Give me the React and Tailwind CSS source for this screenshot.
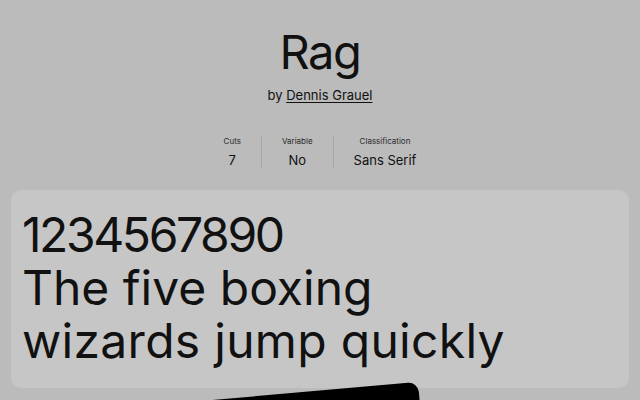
import React from 'react';

const stats = [
  { label: 'Cuts', value: '7' },
  { label: 'Variable', value: 'No' },
  { label: 'Classification', value: 'Sans Serif' },
];

const App = () => {
  return (
    <div className="relative h-[400px] w-full overflow-hidden bg-[#bbbbbb] px-[11px] text-[#111111] font-['Inter','Liberation_Sans',sans-serif]">
      <header className="flex flex-col items-center pt-[28px]">
        <h1 className="text-[47px] leading-[48px] font-normal tracking-[-0.03em]">Rag</h1>
        <p className="mt-[13px] text-[13px] leading-none">
          by <a className="underline underline-offset-2 decoration-1">Dennis Grauel</a>
        </p>

        <div className="mt-[34px] flex">
          {stats.map((s, i) => (
            <div
              key={s.label}
              className={`flex flex-col items-center px-5 ${i > 0 ? 'border-l border-[#a9a9a9]' : ''}`}
            >
              <span className="text-[8px] leading-[10px] text-[#2a2a2a]">{s.label}</span>
              <span className="mt-[6px] text-[13px] leading-[16px]">{s.value}</span>
            </div>
          ))}
        </div>
      </header>

      <section className="mt-[22px] rounded-[10px] bg-[#c6c6c6] px-[11px] pt-[19px] pb-[21px]">
        <p className="text-[48px] leading-[1.1] font-normal">
          <span className="tracking-[-2.4px]">1234567890</span>
          <br />
          The five boxing
          <br />
          <span className="tracking-[0.3px]">wizards jump quickly</span>
        </p>
      </section>

      {/* tilted card peeking from the bottom */}
      <div className="absolute left-[190px] top-[382px] h-[200px] w-[228px] origin-top-right -rotate-5 rounded-[10px] bg-black" />
    </div>
  );
};

export default App;
